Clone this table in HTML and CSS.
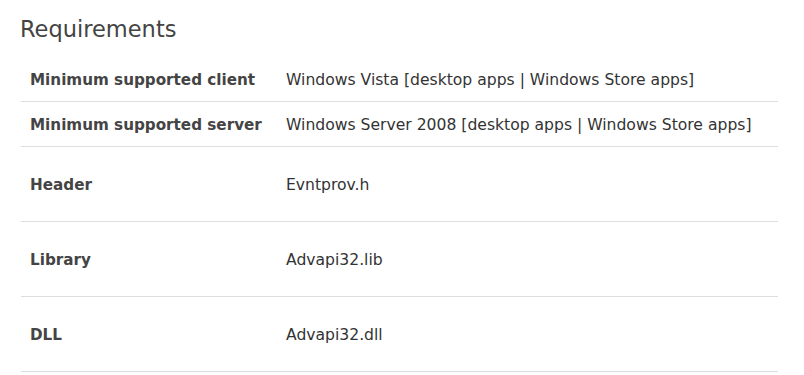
FILE: index.html
```html
<!DOCTYPE html>
<html lang="en">
<head>
  <meta charset="UTF-8">
  <title>Requirements</title>
  <link rel="stylesheet" href="styles.css">
</head>
<body>
  <main class="content">
    <h2 class="section-title">Requirements</h2>
    <table class="req-table">
      <tbody>
        <tr>
          <th>Minimum supported client</th>
          <td>Windows Vista [desktop apps | Windows Store apps]</td>
        </tr>
        <tr>
          <th>Minimum supported server</th>
          <td>Windows Server 2008 [desktop apps | Windows Store apps]</td>
        </tr>
        <tr class="tall">
          <th>Header</th>
          <td>Evntprov.h</td>
        </tr>
        <tr class="tall">
          <th>Library</th>
          <td>Advapi32.lib</td>
        </tr>
        <tr class="tall">
          <th>DLL</th>
          <td>Advapi32.dll</td>
        </tr>
      </tbody>
    </table>
  </main>
</body>
</html>
```

FILE: styles.css
```css
body {
  margin: 0;
  font-family: "DejaVu Sans", sans-serif;
  color: #333;
  background: #fff;
}

.content {
  padding: 15px 20px 0 20px;
}

.section-title {
  font-size: 22.5px;
  font-weight: normal;
  color: #444;
  margin: 0 0 14px 0;
  line-height: 28px;
}

.req-table {
  margin-left: 1px;
  width: 757px;
  border-collapse: collapse;
  font-size: 15px;
}

.req-table th,
.req-table td {
  text-align: left;
  vertical-align: middle;
  padding: 2px 9px 0 9px;
  height: 42px;
  border-bottom: 1px solid #ddd;
}

.req-table th {
  width: 238px;
  font-size: 15.2px;
  font-weight: bold;
  color: #444;
}

.req-table td {
  font-size: 15.6px;
}

.req-table tr.tall th,
.req-table tr.tall td {
  height: 72px;
}
```
